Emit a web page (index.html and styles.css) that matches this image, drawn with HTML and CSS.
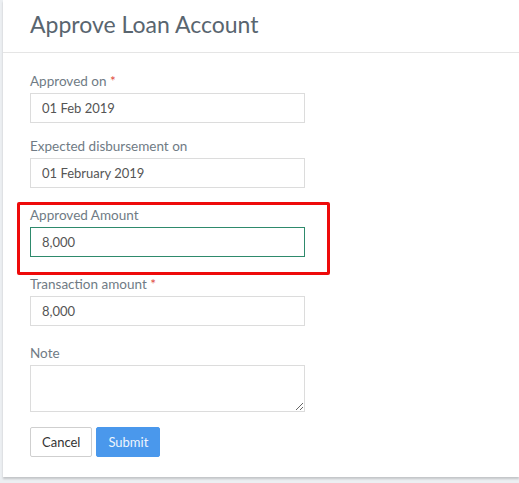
FILE: index.html
```html
<!DOCTYPE html>
<html>
<head>
<meta charset="utf-8">
<link rel="stylesheet" href="styles.css">
</head>
<body>
<div class="modal">
  <div class="modal-header">
    <h2 class="modal-title">Approve Loan Account</h2>
  </div>
  <form class="modal-body">
    <div class="form-group first">
      <label class="form-label">Approved on <span class="req">*</span></label>
      <input class="form-control" type="text" value="01 Feb 2019">
    </div>
    <div class="form-group">
      <label class="form-label">Expected disbursement on</label>
      <input class="form-control" type="text" value="01 February 2019">
    </div>
    <div class="form-group highlighted">
      <label class="form-label">Approved Amount</label>
      <input class="form-control focused" type="text" value="8,000">
    </div>
    <div class="form-group">
      <label class="form-label">Transaction amount <span class="req">*</span></label>
      <input class="form-control" type="text" value="8,000">
    </div>
    <div class="form-group">
      <label class="form-label">Note</label>
      <textarea class="form-control note"></textarea>
    </div>
    <div class="actions">
      <button type="button" class="btn btn-default">Cancel</button>
      <button type="button" class="btn btn-primary">Submit</button>
    </div>
  </form>
</div>
</body>
</html>
```
FILE: styles.css
```css
html, body {
  margin: 0;
  padding: 0;
}
body {
  background: #eceff2;
  font-family: Lato, "Open Sans", sans-serif;
  height: 483px;
  overflow: hidden;
}
.modal {
  margin-left: 3px;
  background: #fff;
  box-shadow: 0 2px 2px rgba(0,0,0,0.18);
}
.modal-header {
  height: 53px;
  box-sizing: border-box;
  border-bottom: 1px solid #e5e5e5;
  padding: 11px 27px 0;
}
.modal-title {
  margin: 0;
  font-weight: 400;
  font-size: 23px;
  line-height: 27px;
  color: #59656f;
}
.modal-body {
  margin: 0;
  padding: 16px 27px 20px;
}
.form-group {
  width: 275px;
  margin-bottom: 15px;
  position: relative;
}
.form-group.first {
  margin-bottom: 11px;
}
.form-label {
  display: block;
  font-size: 13.5px;
  line-height: 18px;
  padding-top: 3px;
  color: #707b85;
  margin-bottom: 3px;
}
.req {
  color: #e0473b;
}
.form-control {
  display: block;
  box-sizing: border-box;
  width: 275px;
  height: 30px;
  margin: 0;
  padding: 0 11px;
  border: 1px solid #dcdcdc;
  border-radius: 0;
  font-family: inherit;
  font-size: 13px;
  color: #555;
  background: #fff;
  outline: none;
}
.form-control.focused {
  border-color: #2e8a6c;
}
.note {
  height: 47px;
  padding: 6px 11px;
}
.highlighted::after {
  content: "";
  position: absolute;
  left: -13px;
  right: -25px;
  top: -1px;
  bottom: -18px;
  border: 3px solid #ee0a0a;
  border-radius: 2px;
  pointer-events: none;
}
.actions {
  display: flex;
  gap: 4px;
}
.btn {
  height: 30px;
  box-sizing: border-box;
  font-family: inherit;
  font-size: 13px;
  border-radius: 2px;
  padding: 0 11px;
  cursor: pointer;
}
.btn-default {
  background: #fff;
  border: 1px solid #cfcfcf;
  color: #333;
}
.btn-primary {
  background: #4a98ec;
  border: 1px solid #4a98ec;
  color: #eef5fd;
}
```
